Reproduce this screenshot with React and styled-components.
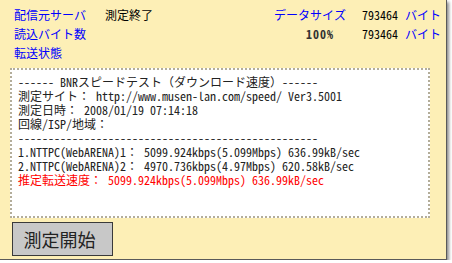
import React from 'react';
import styled, { createGlobalStyle } from 'styled-components';

const GlobalStyle = createGlobalStyle`
  html, body {
    margin: 0;
    padding: 0;
    background: #ffffff;
  }
  body {
    font-family: "Noto Sans Mono CJK JP", "Liberation Mono", "Noto Sans CJK JP", monospace;
  }
`;

const Panel = styled.div`
  width: 446px;
  height: 259px;
  box-sizing: content-box;
  background: #fdefb6;
  border-right: 1px solid #5a5a5a;
  border-bottom: 1px solid #5a5a5a;
  box-shadow: 2px 2px 3px rgba(0, 0, 0, 0.45);
  padding-top: 5px;
  box-sizing: border-box;
  height: 260px;
  width: 447px;
`;

const Header = styled.div`
  display: grid;
  grid-template-columns: 91px 150px 91px 52px auto;
  grid-auto-rows: 19px;
  align-items: center;
  padding-left: 14px;
  font-size: 12px;
  line-height: 19px;
`;

const Cell = styled.span`
  color: ${(p) => (p.$blue ? '#0000ff' : '#000000')};
  text-align: ${(p) => p.$align || 'left'};
  padding-left: ${(p) => p.$pad || 0}px;
  padding-right: ${(p) => p.$padRight || 0}px;
  white-space: nowrap;
`;

const Percent = styled.span`
  font-weight: bold;
  color: #333333;
  text-align: right;
  padding-right: 12px;
  letter-spacing: 1px;
`;

const ResultBox = styled.div`
  margin: 6px 16px 0 10px;
  height: 150px;
  box-sizing: border-box;
  background: #ffffff;
  border: 2px dotted #b3ad9a;
  padding: 5px 0 0 6px;
  font-size: 12px;
  line-height: 14px;
  color: #222222;
`;

const Line = styled.div`
  white-space: pre;
  color: ${(p) => (p.$red ? '#ff0000' : '#222222')};
`;

const StartButton = styled.button`
  margin: 4px 0 0 12px;
  width: 101px;
  height: 34px;
  background: #c8c8c8;
  border: 1px solid #3a3a3a;
  border-radius: 0;
  font-family: "Noto Sans CJK JP", sans-serif;
  font-size: 18px;
  color: #222222;
  padding: 0 6px 0 0;
  cursor: pointer;
`;

const lines = [
  '------ BNRスピードテスト（ダウンロード速度）------',
  '測定サイト： http://www.musen-lan.com/speed/ Ver3.5001',
  '測定日時： 2008/01/19 07:14:18',
  '回線/ISP/地域：',
  '--------------------------------------------------',
  '1.NTTPC(WebARENA)1： 5099.924kbps(5.099Mbps) 636.99kB/sec',
  '2.NTTPC(WebARENA)2： 4970.736kbps(4.97Mbps) 620.58kB/sec',
];

const App = () => (
  <>
    <GlobalStyle />
    <Panel>
      <Header>
        <Cell $blue>配信元サーバ</Cell>
        <Cell>測定終了</Cell>
        <Cell $blue $align="right">データサイズ</Cell>
        <Cell $align="right">793464</Cell>
        <Cell $blue $pad={7}>バイト</Cell>

        <Cell $blue>読込バイト数</Cell>
        <Cell />
        <Percent>100%</Percent>
        <Cell $align="right">793464</Cell>
        <Cell $blue $pad={7}>バイト</Cell>

        <Cell $blue>転送状態</Cell>
      </Header>
      <ResultBox>
        {lines.map((l, i) => (
          <Line key={i}>{l}</Line>
        ))}
        <Line $red>推定転送速度： 5099.924kbps(5.099Mbps) 636.99kB/sec</Line>
      </ResultBox>
      <StartButton>測定開始</StartButton>
    </Panel>
  </>
);

export default App;
